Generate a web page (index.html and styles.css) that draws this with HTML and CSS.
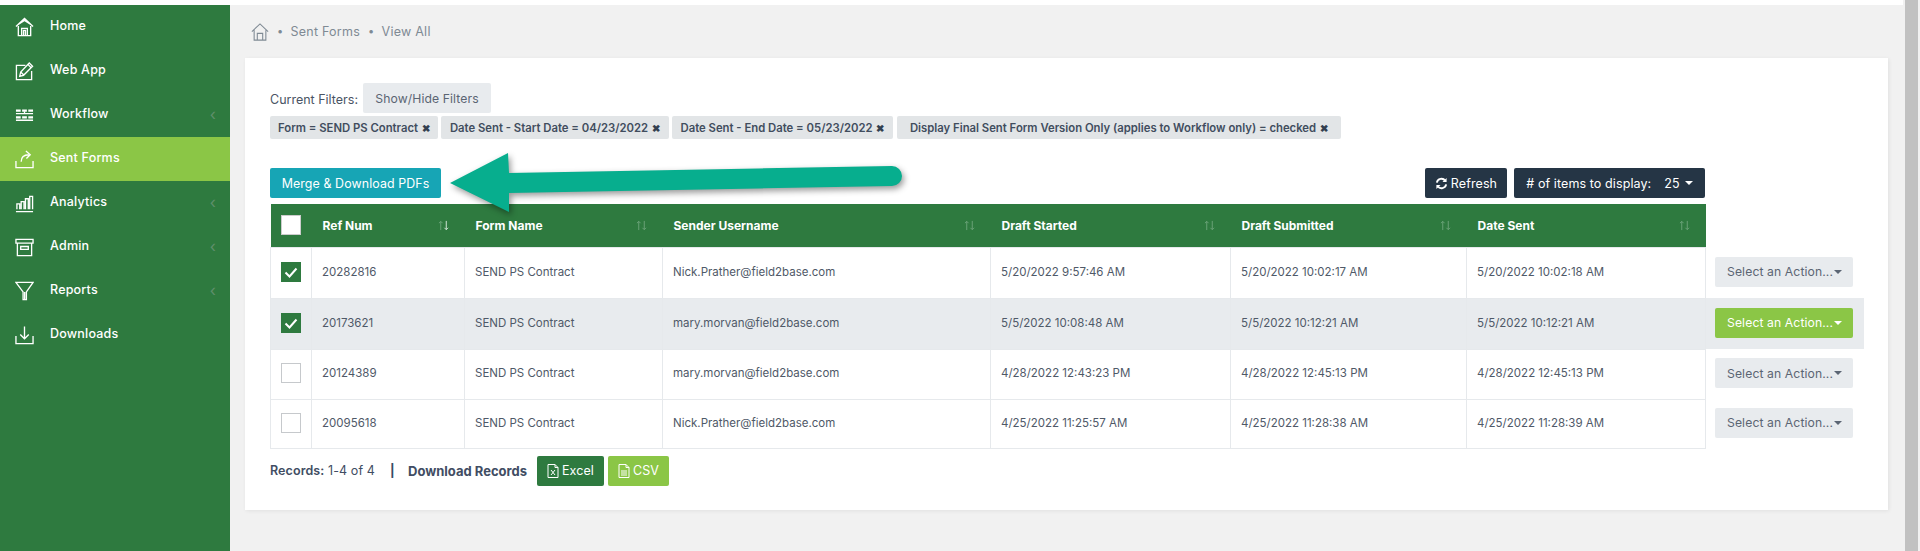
FILE: index.html
```html
<!DOCTYPE html>
<html lang="en">
<head>
<meta charset="utf-8">
<title>Sent Forms</title>
<link rel="stylesheet" href="styles.css">
</head>
<body>
<div class="app">
  <div class="content">
    <div class="strip"></div>
    <div class="shell">
      <nav class="sidebar">
        <a class="nav-item"><svg class="nav-icon" viewBox="0 0 20 20"><path d="M1 9.500 10 1l9 8.500M3 7.500 10 3l7 4.500M3.500 9v10h13V9M7 19v-7.500h6V19M9 19v-5.500h2V19"/></svg><span class="nav-label">Home</span></a>
        <a class="nav-item"><svg class="nav-icon" viewBox="0 0 20 20"><path d="M11 4H1.500v15h16v-9"/><path d="M5 15.500l1-4.500L15 1.500l3.500 3.500-9.500 9.500zM6 11l3.500 3.500M13.500 3l3.500 3.500"/></svg><span class="nav-label">Web App</span></a>
        <a class="nav-item"><svg class="nav-icon" viewBox="0 0 20 20"><path class="thick" d="M1 5.500h5M7.500 5.500h5M14 5.500h5M1 12.500h5M7.500 12.500h5M14 12.500h5"/><path d="M1 8.500h18M1 15.500h18M10 6v2"/></svg><span class="nav-label">Workflow</span><span class="chev">‹</span></a>
        <a class="nav-item active"><svg class="nav-icon" viewBox="0 0 20 20"><path d="M1 12v7h18v-7M6.500 13c0-5 3-7.500 8-7.500M11.500 1.500l4.500 4-4 4"/></svg><span class="nav-label">Sent Forms</span></a>
        <a class="nav-item"><svg class="nav-icon" viewBox="0 0 20 20"><path d="M1 19h18M2 16.500V11h3v5.500M6.500 16.500V8.500h3v8M11 16.500V5.500h3v11M15.500 16.500V3h3v13.500"/></svg><span class="nav-label">Analytics</span><span class="chev">‹</span></a>
        <a class="nav-item"><svg class="nav-icon" viewBox="0 0 20 20"><path d="M1 2h18v4H1zM2.500 6v13h15V6M6 9.500h8v3H6z"/></svg><span class="nav-label">Admin</span><span class="chev">‹</span></a>
        <a class="nav-item"><svg class="nav-icon" viewBox="0 0 20 20"><path d="M1 1h18l-7 10v8H8.500v-8zM10.200 11v8"/></svg><span class="nav-label">Reports</span><span class="chev">‹</span></a>
        <a class="nav-item"><svg class="nav-icon" viewBox="0 0 20 20"><path d="M1 11v8h18v-8M10 1v13M5.500 9.500 10 14l4.500-4.500"/></svg><span class="nav-label">Downloads</span></a>
      </nav>
      <main class="main">
        <div class="crumbs">
          <svg class="crumb-home" viewBox="0 0 20 20"><path d="M1 9.500 10 1l9 8.500M3.500 8v11h13V8M7 19v-7.500h6V19"/></svg>
          <span class="dot">•</span><span>Sent Forms</span><span class="dot">•</span><span>View All</span>
        </div>
        <section class="card">
          <div class="filter-row">
            <span class="filter-label">Current Filters:</span>
            <button class="btn btn-light btn-filters">Show/Hide Filters</button>
          </div>
          <div class="chips">
            <span class="chip chip-a">Form = SEND PS Contract<i class="x">✖</i></span>
            <span class="chip chip-b">Date Sent - Start Date = 04/23/2022<i class="x">✖</i></span>
            <span class="chip chip-c">Date Sent - End Date = 05/23/2022<i class="x">✖</i></span>
            <span class="chip chip-d">Display Final Sent Form Version Only (applies to Workflow only) = checked<i class="x">✖</i></span>
          </div>
          <div class="toolbar">
            <button class="btn btn-teal btn-merge">Merge &amp; Download PDFs</button>
            <div class="toolbar-right">
              <button class="btn btn-navy btn-refresh"><svg class="refresh" viewBox="0 0 14 14"><path d="M2 6a5 5 0 0 1 9-2M12 8a5 5 0 0 1-9 2"/><path class="fill" d="M12.500 1v4.500H8zM1.500 13V8.500H6z"/></svg>Refresh</button>
              <button class="btn btn-navy btn-items"><span># of items to display:</span><span class="count">25</span><span class="caret caret-white"></span></button>
            </div>
          </div>
          <table class="grid">
            <colgroup>
              <col class="c-check"><col class="c-ref"><col class="c-form"><col class="c-user"><col class="c-date1"><col class="c-date2"><col class="c-date3"><col class="c-act">
            </colgroup>
            <thead>
              <tr>
                <th class="check-cell"><span class="box head-box"></span></th>
                <th><div class="th-in">Ref Num<svg class="sort" viewBox="0 0 12 11"><path class="up" d="M3 10.500V1M1 3l2-2 2 2"/><path class="down" d="M9 .5V10M7 8l2 2 2-2"/></svg></div></th>
                <th><div class="th-in">Form Name<svg class="sort" viewBox="0 0 12 11"><path class="up" d="M3 10.500V1M1 3l2-2 2 2"/><path class="up" d="M9 .5V10M7 8l2 2 2-2"/></svg></div></th>
                <th><div class="th-in">Sender Username<svg class="sort" viewBox="0 0 12 11"><path class="up" d="M3 10.500V1M1 3l2-2 2 2"/><path class="up" d="M9 .5V10M7 8l2 2 2-2"/></svg></div></th>
                <th><div class="th-in">Draft Started<svg class="sort" viewBox="0 0 12 11"><path class="up" d="M3 10.500V1M1 3l2-2 2 2"/><path class="up" d="M9 .5V10M7 8l2 2 2-2"/></svg></div></th>
                <th><div class="th-in">Draft Submitted<svg class="sort" viewBox="0 0 12 11"><path class="up" d="M3 10.500V1M1 3l2-2 2 2"/><path class="up" d="M9 .5V10M7 8l2 2 2-2"/></svg></div></th>
                <th><div class="th-in">Date Sent<svg class="sort" viewBox="0 0 12 11"><path class="up" d="M3 10.500V1M1 3l2-2 2 2"/><path class="up" d="M9 .5V10M7 8l2 2 2-2"/></svg></div></th>
                <th class="blank"></th>
              </tr>
            </thead>
            <tbody>
              <tr class="r-tall">
                <td class="check-cell"><span class="box on"><svg viewBox="0 0 20 20"><path d="M4.500 10.500 8.500 14.500 15.500 6.500"/></svg></span></td>
                <td>20282816</td><td>SEND PS Contract</td><td>Nick.Prather@field2base.com</td><td>5/20/2022 9:57:46 AM</td><td>5/20/2022 10:02:17 AM</td><td>5/20/2022 10:02:18 AM</td>
                <td class="act"><button class="btn btn-light btn-action">Select an Action...<span class="caret"></span></button></td>
              </tr>
              <tr class="r-tall hl">
                <td class="check-cell"><span class="box on"><svg viewBox="0 0 20 20"><path d="M4.500 10.500 8.500 14.500 15.500 6.500"/></svg></span></td>
                <td>20173621</td><td>SEND PS Contract</td><td>mary.morvan@field2base.com</td><td>5/5/2022 10:08:48 AM</td><td>5/5/2022 10:12:21 AM</td><td>5/5/2022 10:12:21 AM</td>
                <td class="act"><button class="btn btn-green btn-action">Select an Action...<span class="caret caret-white"></span></button></td>
              </tr>
              <tr class="r-short">
                <td class="check-cell"><span class="box"></span></td>
                <td>20124389</td><td>SEND PS Contract</td><td>mary.morvan@field2base.com</td><td>4/28/2022 12:43:23 PM</td><td>4/28/2022 12:45:13 PM</td><td>4/28/2022 12:45:13 PM</td>
                <td class="act"><button class="btn btn-light btn-action">Select an Action...<span class="caret"></span></button></td>
              </tr>
              <tr class="r-last">
                <td class="check-cell"><span class="box"></span></td>
                <td>20095618</td><td>SEND PS Contract</td><td>Nick.Prather@field2base.com</td><td>4/25/2022 11:25:57 AM</td><td>4/25/2022 11:28:38 AM</td><td>4/25/2022 11:28:39 AM</td>
                <td class="act"><button class="btn btn-light btn-action">Select an Action...<span class="caret"></span></button></td>
              </tr>
            </tbody>
          </table>
          <div class="foot">
            <span class="records"><b>Records:</b> 1-4 of 4</span>
            <span class="sep">|</span>
            <b class="dl">Download Records</b>
            <button class="btn btn-dark-green btn-excel"><svg class="file" viewBox="0 0 12 14"><path d="M1 .5h7l3 3v10H1zM8 .5v3h3"/><path class="x-mark" d="M4 6l4 5M8 6l-4 5"/></svg>Excel</button>
            <button class="btn btn-green btn-csv"><svg class="file" viewBox="0 0 12 14"><path d="M1 .5h7l3 3v10H1zM8 .5v3h3M3 7h6M3 9h6M3 11h6"/></svg>CSV</button>
          </div>
        </section>
      </main>
    </div>
  </div>
  <div class="scroll-track"><div class="scroll-thumb"></div></div>
  <svg class="arrow" viewBox="0 0 480 80"><path d="M10 38 68 8l1 20 383-7a10 10 0 0 1 0 20L69 48v19z"/></svg>
</div>
</body>
</html>
```
FILE: styles.css
```css
* { box-sizing: border-box; }
html, body { margin: 0; height: 100%; overflow: hidden; }
body { background: #f1f1f1; font-family: Inter, "Open Sans", "Liberation Sans", sans-serif; font-size: 12px; color: #4a5464; }
button { font-family: inherit; border: 0; cursor: pointer; }

.app { position: relative; display: flex; height: 551px; }
.content { flex: 1; min-width: 0; display: flex; flex-direction: column; }
.strip { height: 5px; background: #fff; margin-right: 2px; }
.shell { flex: 1; display: flex; min-height: 0; }

.scroll-track { width: 15px; padding-right: 2px; background: #f1f1f1; }
.scroll-thumb { height: 100%; background: #c1c1c1; }

.sidebar { width: 230px; background: #2e7a3f; flex: none; }
.nav-item { height: 44px; display: flex; align-items: center; padding: 0 14px 0 15px; color: #fff; font-size: 12.5px; font-weight: 500; letter-spacing: .2px; }
.nav-item.active { background: #8bc646; }
.nav-icon { width: 19px; height: 20px; fill: none; stroke: #fff; stroke-width: 1.4; flex: none; }
.nav-icon .thick { stroke-width: 2.4; }
.nav-label { margin-left: 16px; flex: 1; position: relative; top: -2px; }
.chev { color: #5f8f6c; font-size: 16px; font-weight: 400; position: relative; top: -1px; }

.main { flex: 1; min-width: 0; padding: 0 17px 0 15px; }
.crumbs { height: 53px; display: flex; align-items: center; padding-left: 6px; color: #7f8a94; font-size: 12.5px; letter-spacing: .25px; }
.crumb-home { width: 18px; height: 18px; fill: none; stroke: #7f8a94; stroke-width: 1.2; }
.dot { margin: -2px 7px 0 8px; font-size: 11px; }

.card { background: #fff; height: 452px; padding: 25px; box-shadow: 1px 1px 4px rgba(0,0,0,.07); }

.btn { height: 30px; border-radius: 2px; padding: 0; font-size: 12.5px; display: inline-flex; align-items: center; justify-content: center; letter-spacing: .1px; }
.btn-light { background: #e8ebee; color: #5b6573; }
.btn-teal { background: #17a5b5; color: #fff; }
.btn-navy { background: #253545; color: #fff; }
.btn-green { background: #8bc646; color: #fff; }
.btn-dark-green { background: #2e7a3f; color: #fff; }

.filter-row { display: flex; align-items: center; height: 30px; }
.filter-label { width: 93px; color: #4a5464; font-size: 12.5px; position: relative; top: 1px; }
.btn-filters { width: 128px; font-size: 12.2px; }

.chips { display: flex; gap: 3px; margin-top: 3px; }
.chip { height: 23px; display: inline-flex; align-items: center; justify-content: center; gap: 4px; background: #e2e5e7; border-radius: 2px; color: #414d5e; font-size: 11.3px; font-weight: 600; white-space: nowrap; }
.chip-a { width: 168px; }
.chip-b { width: 228px; }
.chip-c { width: 221px; margin-right: 1px; }
.chip-d { width: 444px; }
.x { font-style: normal; font-size: 10px; color: #333f50; }

.toolbar { display: flex; justify-content: space-between; margin-top: 29px; width: 1435px; }
.toolbar-right { display: flex; gap: 7px; }
.btn-merge { width: 171px; font-size: 12.4px; }
.btn-refresh { width: 82px; gap: 3px; }
.refresh { width: 13px; height: 13px; fill: none; stroke: #fff; stroke-width: 2; }
.refresh .fill { fill: #fff; stroke: none; }
.btn-items { width: 191px; }
.count { margin-left: 13px; }
.caret { display: inline-block; width: 0; height: 0; border: 4px solid transparent; border-top-color: #5b6573; border-bottom: 0; margin-left: 2px; }
.caret-white { border-top-color: #fff; margin-left: 5px; }

.grid { margin-top: 6px; width: 1593px; border-collapse: collapse; table-layout: fixed; font-size: 11.5px; color: #4f5968; }
.c-check { width: 41px; } .c-ref { width: 153px; } .c-form { width: 198px; } .c-user { width: 328px; }
.c-date1 { width: 240px; } .c-date2 { width: 236px; } .c-date3 { width: 239px; } .c-act { width: 158px; }
.grid th { height: 43px; background: #2e7a3f; color: #fff; font-size: 12px; font-weight: 700; text-align: left; padding: 0 0 0 11px; }
.grid th.blank { background: transparent; }
.grid th.check-cell { padding: 0; }
.th-in { display: flex; justify-content: space-between; align-items: center; padding-right: 16px; }
.sort { width: 11px; height: 11px; fill: none; stroke-width: 1; }
.sort .up { stroke: #6fa57c; }
.sort .down { stroke: #dfeee2; }
.grid td { border: 1px solid #e6e9ec; padding: 0 0 2px 10px; }
.grid td.act { border: 0; border-left: 1px solid #e6e9ec; padding: 0 0 2px 9px; }
.r-tall td { height: 51px; }
.r-short td { height: 50px; }
.r-last td { height: 49px; }
.hl td { background: #e8ebee; }
.grid td.check-cell { padding: 0 1px 2px 0; text-align: center; }
.box { display: inline-block; width: 20px; height: 20px; border: 1px solid #c6c9cc; background: #fff; vertical-align: middle; }
.head-box { display: block; margin-left: 10px; border-color: #ccc; }
.box.on { background: #2e7a3f; border: 0; }
.box svg { display: block; width: 20px; height: 20px; fill: none; stroke: #fff; stroke-width: 2; }
.btn-action { width: 138px; font-size: 12.2px; justify-content: flex-start; padding-left: 12px; }
.btn-action .caret { margin-left: 1px; }

.foot { margin-top: 7px; height: 30px; display: flex; align-items: center; color: #414d63; font-size: 12.5px; }
.foot b { font-weight: 600; }
.records { width: 120px; letter-spacing: .1px; }
.sep { width: 18px; font-weight: 700; color: #3a4a66; }
.foot .dl { width: 129px; font-size: 13px; font-weight: 700; }
.btn-excel { width: 67px; gap: 3px; margin-right: 4px; }
.btn-csv { width: 61px; gap: 3px; }
.file { width: 12px; height: 14px; fill: none; stroke: #fff; stroke-width: 1; }

.arrow { position: absolute; left: 440px; top: 145px; width: 480px; height: 80px; fill: #07ae8e; filter: drop-shadow(2px 3px 3px rgba(0,0,0,.4)); overflow: visible; pointer-events: none; }
```
